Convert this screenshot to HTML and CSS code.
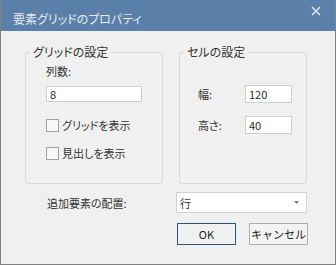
FILE: index.html
```html
<!DOCTYPE html>
<html lang="ja">
<head>
    <meta charset="UTF-8">
    <title>要素グリッドのプロパティ</title>
    <link rel="stylesheet" href="styles.css">
</head>
<body>
    <div class="window">
        <div class="titlebar">
            <span class="title">要素グリッドのプロパティ</span>
            <svg class="close" width="10" height="10" viewBox="0 0 10 10">
                <path d="M1 1 L9 9 M9 1 L1 9" stroke="#dde4ec" stroke-width="1.6" fill="none"/>
            </svg>
        </div>

        <div class="content">
            <div class="groups">
                <fieldset class="group grid-group">
                    <legend>グリッドの設定</legend>
                    <div class="group-body">
                        <div class="field-label">列数:</div>
                        <input type="text" class="text-input cols" value="8">
                        <label class="check first"><span class="box"></span>グリッドを表示</label>
                        <label class="check"><span class="box"></span>見出しを表示</label>
                    </div>
                </fieldset>

                <fieldset class="group cell-group">
                    <legend>セルの設定</legend>
                    <div class="group-body">
                        <div class="row first">
                            <span class="row-label">幅:</span>
                            <input type="text" class="text-input size" value="120">
                        </div>
                        <div class="row">
                            <span class="row-label">高さ:</span>
                            <input type="text" class="text-input size" value="40">
                        </div>
                    </div>
                </fieldset>
            </div>

            <div class="placement">
                <span class="placement-label">追加要素の配置:</span>
                <div class="combo">
                    <span>行</span>
                    <svg width="5" height="3" viewBox="0 0 5 3"><path d="M0 0 L5 0 L2.5 3 Z" fill="#7a7a7a"/></svg>
                </div>
            </div>

            <div class="buttons">
                <button class="btn default">OK</button>
                <button class="btn">キャンセル</button>
            </div>
        </div>
    </div>
</body>
</html>
```

FILE: styles.css
```css
body {
    margin: 0;
    font-family: "Noto Sans CJK JP", "Noto Sans", sans-serif;
    font-size: 11px;
    font-feature-settings: "palt" 1;
    color: #333;
}
.window {
    width: 334px;
    height: 264px;
    background-color: #f0f0f0;
    border: 1px solid #7f7f7f;
    border-top: none;
}
.titlebar {
    height: 31px;
    background-color: #5a7fa8;
    display: flex;
    align-items: center;
    justify-content: space-between;
    padding: 0 14px 0 12px;
}
.title {
    color: #e6ebf1;
    font-size: 12px;
    padding-top: 6px;
}
.close {
    margin-top: -9px;
}
.content {
    padding: 14px 27px 0 24px;
}
.groups {
    display: flex;
    gap: 16px;
    height: 139px;
}
.group {
    margin: 0;
    padding: 0;
    border: 1px solid #d9d9d9;
    border-radius: 3px;
    box-sizing: border-box;
    min-width: 0;
}
.group legend {
    margin-left: 4px;
    padding: 0 3px;
    line-height: 14px;
    font-size: 12px;
}
.grid-group {
    width: 138px;
}
.grid-group .group-body {
    padding-left: 20px;
}
.cell-group {
    width: 128px;
}
.cell-group .group-body {
    padding-left: 18px;
}
.field-label {
    margin-top: 5px;
    line-height: 14px;
}
.text-input {
    display: block;
    box-sizing: border-box;
    border: 1px solid #cfcfcf;
    background-color: white;
    font-family: inherit;
    font-size: 11px;
    color: #1e1e2e;
    padding: 0 0 0 3px;
    outline: none;
}
.cols {
    width: 96px;
    height: 16px;
    margin-top: 8px;
}
.check {
    display: flex;
    align-items: center;
    line-height: 14px;
    margin-top: 14px;
}
.check.first {
    margin-top: 16px;
}
.box {
    width: 11px;
    height: 11px;
    border: 1px solid #a2a2a2;
    background-color: #f7f7f7;
    margin-right: 3px;
}
.row {
    display: flex;
    align-items: center;
    margin-top: 13px;
}
.row.first {
    margin-top: 26px;
}
.row-label {
    width: 47px;
}
.size {
    width: 47px;
    height: 18px;
}
.placement {
    display: flex;
    align-items: center;
    margin-top: 8px;
    padding-left: 22px;
}
.placement-label {
    width: 129px;
}
.combo {
    width: 131px;
    height: 21px;
    box-sizing: border-box;
    border: 1px solid #d4d4d4;
    background-color: white;
    display: flex;
    align-items: center;
    justify-content: space-between;
    padding: 0 7px 0 3px;
}
.buttons {
    display: flex;
    justify-content: flex-end;
    gap: 13px;
    margin-top: 10px;
}
.btn {
    width: 59px;
    height: 22px;
    font-family: inherit;
    font-size: 11px;
    color: #222;
    background-color: #f3f3f3;
    border: 1px solid #adadad;
    padding: 0;
    white-space: nowrap;
}
.btn.default {
    border-color: #2d5277;
    background-color: #f1f1f1;
}
```
